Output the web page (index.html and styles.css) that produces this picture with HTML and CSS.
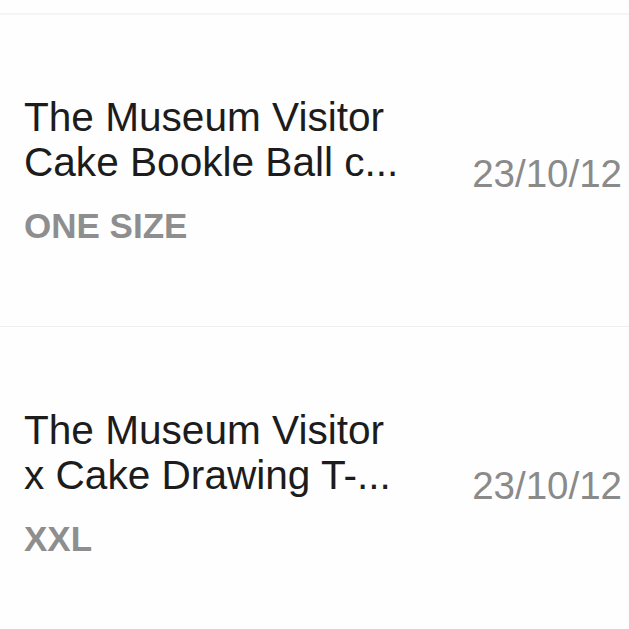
FILE: index.html
```html
<!DOCTYPE html>
<html>
<head>
<meta charset="utf-8">
<link rel="stylesheet" href="styles.css">
</head>
<body>
<div class="top"></div>
<ul class="list">
  <li class="item">
    <div class="info">
      <div class="title">The Museum Visitor<br>Cake Bookle Ball c...</div>
      <div class="size">ONE SIZE</div>
    </div>
    <div class="date">23/10/12</div>
  </li>
  <li class="item">
    <div class="info">
      <div class="title">The Museum Visitor<br>x Cake Drawing T-...</div>
      <div class="size">XXL</div>
    </div>
    <div class="date">23/10/12</div>
  </li>
</ul>
</body>
</html>
```
FILE: styles.css
```css
html, body {
  margin: 0;
  padding: 0;
  background: #fefefe;
  font-family: "Liberation Sans", Arial, sans-serif;
}
.top {
  height: 13px;
  border-bottom: 2px solid #f4f4f4;
}
.list {
  list-style: none;
  margin: 0;
  padding: 0;
}
.item {
  display: flex;
  justify-content: space-between;
  align-items: center;
  height: 312px;
  border-bottom: 1px solid #efefef;
  box-sizing: border-box;
}
.item + .item {
  border-bottom: none;
}
.info {
  padding-left: 24px;
}
.title {
  font-size: 40.6px;
  line-height: 45px;
  color: #1c1c1c;
  white-space: nowrap;
}
.size {
  margin-top: 21px;
  font-size: 35px;
  line-height: 40px;
  font-weight: bold;
  color: #8e8e8e;
}
.date {
  padding-right: 7px;
  padding-top: 6px;
  font-size: 38.5px;
  color: #8a8a8a;
}
```
